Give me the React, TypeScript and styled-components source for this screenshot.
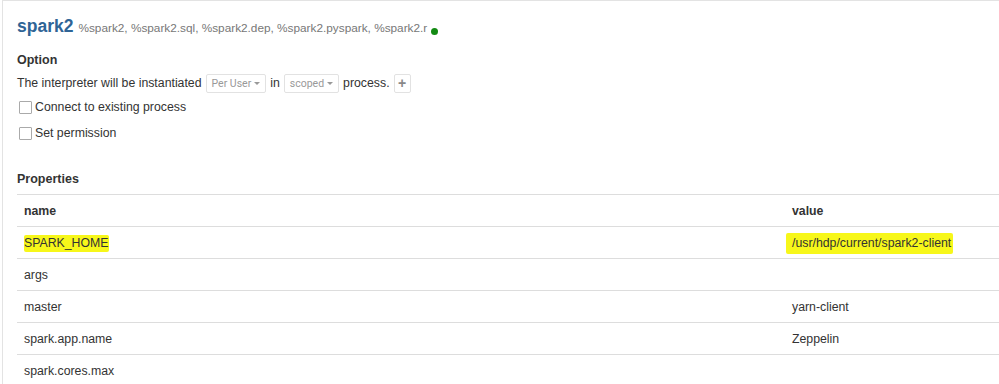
import styled, { createGlobalStyle } from 'styled-components';

const GlobalStyle = createGlobalStyle`
  html, body {
    margin: 0;
    padding: 0;
    background: #fff;
    overflow: hidden;
  }
  body {
    font-family: 'Liberation Sans', Arial, sans-serif;
    font-size: 12.3px;
    color: #333;
  }
`;

interface Property {
  name: string;
  value: string;
  marked?: boolean;
}

const PROPERTIES: Property[] = [
  { name: 'SPARK_HOME', value: '/usr/hdp/current/spark2-client', marked: true },
  { name: 'args', value: '' },
  { name: 'master', value: 'yarn-client' },
  { name: 'spark.app.name', value: 'Zeppelin' },
  { name: 'spark.cores.max', value: '' },
];

function App() {
  return (
    <>
      <GlobalStyle />
      <Page>
        <Panel>
          <Header>
            <Title>spark2</Title>
            <Bindings>%spark2, %spark2.sql, %spark2.dep, %spark2.pyspark, %spark2.r</Bindings>
            <StatusDot />
          </Header>

          <SectionTitle>Option</SectionTitle>
          <OptionLine>
            The interpreter will be instantiated
            <Dropdown>
              Per User <Caret />
            </Dropdown>
            in
            <Dropdown>
              scoped <Caret />
            </Dropdown>
            process.
            <PlusButton>+</PlusButton>
          </OptionLine>
          <CheckRow>
            <CheckBox />
            Connect to existing process
          </CheckRow>
          <CheckRow>
            <CheckBox />
            Set permission
          </CheckRow>

          <SectionTitle $spaced>Properties</SectionTitle>
          <Table>
            <thead>
              <tr>
                <HeadCell>name</HeadCell>
                <HeadCell>value</HeadCell>
              </tr>
            </thead>
            <tbody>
              {PROPERTIES.map((p) => (
                <tr key={p.name}>
                  <Cell>{p.marked ? <Marker>{p.name}</Marker> : p.name}</Cell>
                  <Cell>{p.marked ? <Marker $wide>{p.value}</Marker> : p.value}</Cell>
                </tr>
              ))}
            </tbody>
          </Table>
        </Panel>
      </Page>
    </>
  );
}

export default App;

const Page = styled.div`
  width: 999px;
  height: 384px;
  padding-left: 2px;
  box-sizing: border-box;
  overflow: hidden;
`;

const Panel = styled.div`
  border-top: 1px solid #e3e3e3;
  border-left: 1px solid #e3e3e3;
  padding: 0 0 0 14px;
  height: 100%;
  box-sizing: border-box;
`;

const Header = styled.div`
  display: flex;
  align-items: baseline;
  gap: 5px;
  padding-top: 15px;
  height: 31px;
  box-sizing: content-box;
`;

const Title = styled.h3`
  margin: 0;
  font-size: 17.5px;
  font-weight: bold;
  color: #2f6496;
`;

const Bindings = styled.span`
  font-size: 11.8px;
  color: #777;
`;

const StatusDot = styled.span`
  width: 7px;
  height: 7px;
  border-radius: 50%;
  background: #138a13;
  margin-left: -1px;
  align-self: center;
  margin-top: -1px;
`;

const SectionTitle = styled.div<{ $spaced?: boolean }>`
  font-weight: bold;
  font-size: 12.5px;
  line-height: 20px;
  margin-top: ${({ $spaced }) => ($spaced ? '23px' : '3px')};
  margin-bottom: ${({ $spaced }) => ($spaced ? '5px' : '0')};
`;

const OptionLine = styled.div`
  display: flex;
  align-items: center;
  gap: 4px;
  height: 22px;
  margin-top: 2px;
`;

const Dropdown = styled.span`
  display: inline-flex;
  align-items: center;
  gap: 3px;
  height: 19px;
  padding: 0 5px;
  border: 1px solid #e2e2e2;
  border-radius: 2px;
  font-family: Roboto, 'Liberation Sans', sans-serif;
  font-size: 10.5px;
  color: #999;
  box-sizing: border-box;
`;

const Caret = styled.span`
  width: 0;
  height: 0;
  border-left: 3px solid transparent;
  border-right: 3px solid transparent;
  border-top: 3px solid #999;
`;

const PlusButton = styled.span`
  display: inline-flex;
  align-items: center;
  justify-content: center;
  width: 17px;
  height: 19px;
  border: 1px solid #e2e2e2;
  border-radius: 2px;
  font-weight: bold;
  font-size: 14px;
  color: #888;
  box-sizing: border-box;
`;

const CheckRow = styled.label`
  display: flex;
  align-items: center;
  gap: 3px;
  height: 26px;
  padding-left: 2px;
`;

const CheckBox = styled.span`
  width: 13px;
  height: 13px;
  border: 1px solid #aaa;
  border-radius: 1px;
  box-sizing: border-box;
  background: #fff;
`;

const Table = styled.table`
  width: 1100px;
  border-collapse: collapse;
  border-top: 1px solid #ddd;
`;

const HeadCell = styled.th`
  text-align: left;
  font-weight: bold;
  height: 31px;
  padding: 0 7px;
  border-bottom: 1px solid #ddd;
  &:first-child {
    width: 754px;
  }
`;

const Cell = styled.td`
  height: 31px;
  padding: 0 7px;
  border-bottom: 1px solid #ddd;
`;

const Marker = styled.span<{ $wide?: boolean }>`
  background: #f7f71a;
  padding: ${({ $wide }) => ($wide ? '3px 2px 4px 0' : '1px 0 2px')};
  margin-left: ${({ $wide }) => ($wide ? '-6px' : '0')};
  padding-left: ${({ $wide }) => ($wide ? '6px' : '0')};
  border-radius: 2px;
`;
